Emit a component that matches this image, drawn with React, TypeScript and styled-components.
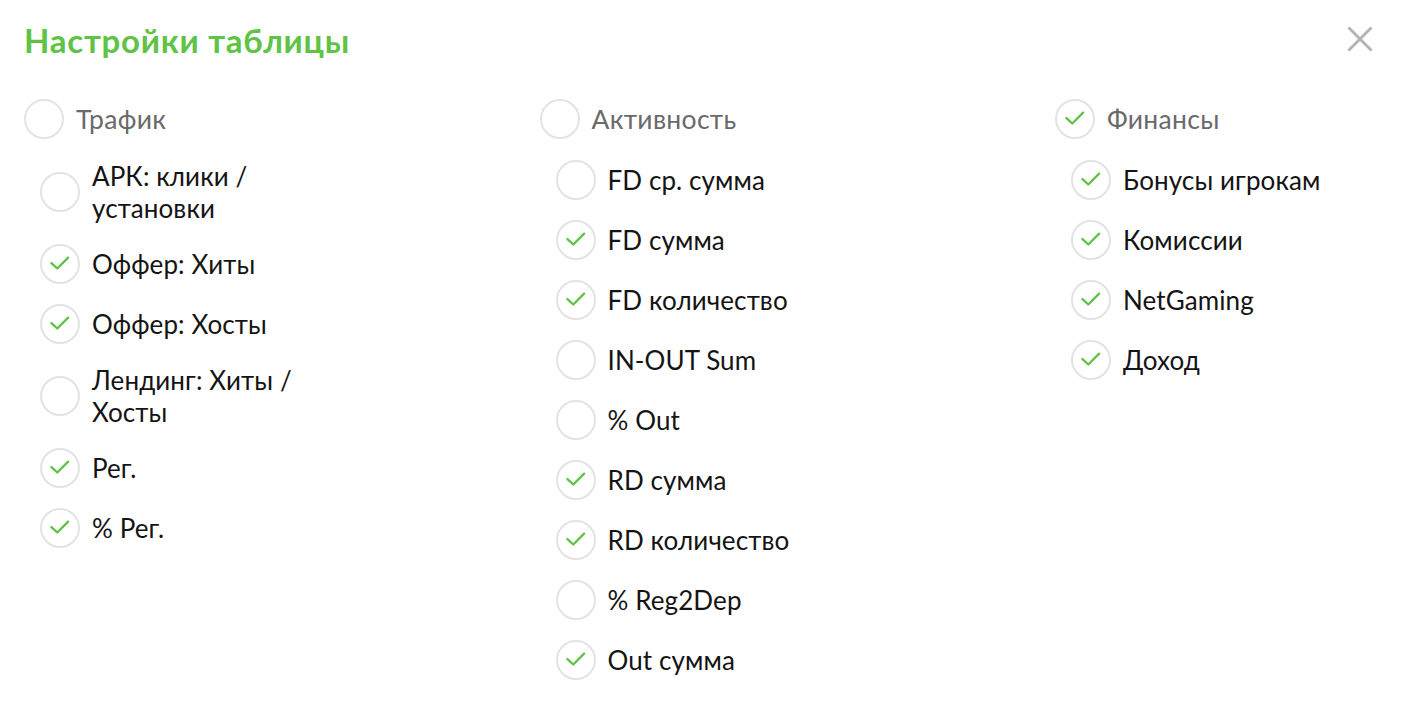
import React, { useState } from 'react';
import styled, { createGlobalStyle } from 'styled-components';

const GlobalStyle = createGlobalStyle`
  html, body {
    margin: 0;
    padding: 0;
    background: #ffffff;
  }
  body {
    font-family: Lato, "Noto Sans", "DejaVu Sans", sans-serif;
  }
`;

const colors = {
  green: '#5fc345',
  border: '#e3e3e3',
  groupText: '#6a6a6a',
  itemText: '#141414',
  close: '#b4b4b4',
};

const Page = styled.div`
  width: 1418px;
  height: 704px;
  box-sizing: border-box;
  padding: 20px 24px 0 24px;
  background: #fff;
  overflow: hidden;
`;

const Header = styled.div`
  display: flex;
  align-items: center;
  justify-content: space-between;
  height: 40px;
`;

const Title = styled.h1`
  margin: 0;
  font-size: 33px;
  font-weight: 700;
  line-height: 40px;
  color: ${colors.green};
  letter-spacing: 0.75px;
`;

const CloseButton = styled.button`
  width: 40px;
  height: 40px;
  margin-right: 14px;
  margin-top: -2px;
  padding: 0;
  border: none;
  background: transparent;
  display: flex;
  align-items: center;
  justify-content: center;
  cursor: pointer;
`;

const Columns = styled.div`
  display: grid;
  grid-template-columns: repeat(3, 515.5px);
  margin-top: 39px;
`;

const Column = styled.div`
  display: flex;
  flex-direction: column;
`;

const Items = styled.div`
  display: flex;
  flex-direction: column;
  gap: 20px;
  padding-left: 16px;
  margin-top: 21px;
`;

const Row = styled.label`
  display: flex;
  align-items: center;
  gap: 12px;
  cursor: pointer;
`;

const Circle = styled.span<{ $checked: boolean }>`
  flex: 0 0 40px;
  width: 40px;
  height: 40px;
  box-sizing: border-box;
  border-radius: 50%;
  border: 2px solid ${colors.border};
  background: #fff;
  display: flex;
  align-items: center;
  justify-content: center;

  svg {
    visibility: ${(p) => (p.$checked ? 'visible' : 'hidden')};
  }
`;

const GroupLabel = styled.span`
  font-size: 26.5px;
  line-height: 32px;
  color: ${colors.groupText};
  letter-spacing: 0.3px;
`;

const ItemLabel = styled.span`
  font-size: 26px;
  line-height: 32px;
  color: ${colors.itemText};
  letter-spacing: 0.1px;
  max-width: 235px;
`;

const Check = () => (
  <svg width="40" height="40" viewBox="0 0 40 40" fill="none">
    <path
      d="M10.5 19 L17 25 L29 13"
      stroke={colors.green}
      strokeWidth="2.6"
      strokeLinecap="round"
      strokeLinejoin="round"
    />
  </svg>
);

interface Group {
  title: string;
  items: { label: string; checked: boolean }[];
}

const groups: Group[] = [
  {
    title: 'Трафик',
    items: [
      { label: 'АРК: клики / установки', checked: false },
      { label: 'Оффер: Хиты', checked: true },
      { label: 'Оффер: Хосты', checked: true },
      { label: 'Лендинг: Хиты / Хосты', checked: false },
      { label: 'Рег.', checked: true },
      { label: '% Рег.', checked: true },
    ],
  },
  {
    title: 'Активность',
    items: [
      { label: 'FD ср. сумма', checked: false },
      { label: 'FD сумма', checked: true },
      { label: 'FD количество', checked: true },
      { label: 'IN-OUT Sum', checked: false },
      { label: '% Out', checked: false },
      { label: 'RD сумма', checked: true },
      { label: 'RD количество', checked: true },
      { label: '% Reg2Dep', checked: false },
      { label: 'Out сумма', checked: true },
    ],
  },
  {
    title: 'Финансы',
    items: [
      { label: 'Бонусы игрокам', checked: true },
      { label: 'Комиссии', checked: true },
      { label: 'NetGaming', checked: true },
      { label: 'Доход', checked: true },
    ],
  },
];

export default function App() {
  const [state, setState] = useState(groups);

  const toggle = (gi: number, ii: number) => {
    setState((prev) =>
      prev.map((g, i) =>
        i !== gi
          ? g
          : {
              ...g,
              items: g.items.map((it, j) =>
                j === ii ? { ...it, checked: !it.checked } : it
              ),
            }
      )
    );
  };

  return (
    <>
      <GlobalStyle />
      <Page>
        <Header>
          <Title>Настройки таблицы</Title>
          <CloseButton aria-label="Закрыть">
            <svg width="26" height="26" viewBox="0 0 26 26">
              <path
                d="M1.5 1.5 L24.5 24.5 M24.5 1.5 L1.5 24.5"
                stroke={colors.close}
                strokeWidth="3"
              />
            </svg>
          </CloseButton>
        </Header>
        <Columns>
          {state.map((g, gi) => {
            const allChecked = g.items.every((it) => it.checked);
            return (
              <Column key={g.title}>
                <Row>
                  <Circle $checked={allChecked}>
                    <Check />
                  </Circle>
                  <GroupLabel>{g.title}</GroupLabel>
                </Row>
                <Items>
                  {g.items.map((it, ii) => (
                    <Row key={it.label} onClick={() => toggle(gi, ii)}>
                      <Circle $checked={it.checked}>
                        <Check />
                      </Circle>
                      <ItemLabel>{it.label}</ItemLabel>
                    </Row>
                  ))}
                </Items>
              </Column>
            );
          })}
        </Columns>
      </Page>
    </>
  );
}
